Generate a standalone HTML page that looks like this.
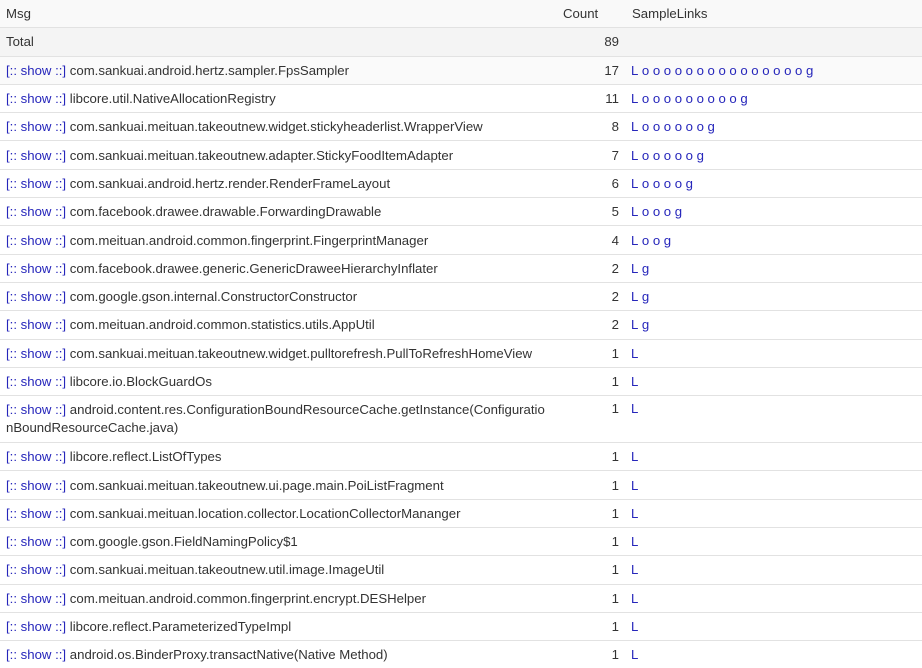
<!DOCTYPE html>
<html><head><meta charset="utf-8"><style>
html,body{margin:0;padding:0;background:#fff;width:922px;height:668px;overflow:hidden}
body{font-family:"Liberation Sans",Arial,sans-serif;font-size:13.2px;color:#333}
table{border-collapse:collapse;width:922px;table-layout:fixed}
td,th{border-bottom:1px solid #e2e2e2;height:27.3px;padding:0 6px;vertical-align:middle;white-space:nowrap;font-weight:normal;text-align:left;overflow:visible}
th{background:#f9f9f9}
tr.t td{background:#f4f4f4}
tr.g td{background:#fafafa}
td.c,th.c{text-align:right;padding-right:3px}
td.l{padding-left:9px;color:#2626bb;letter-spacing:3.6px}
a{color:#2626bb;text-decoration:none}
tr.w td{height:42px;line-height:18px;padding-top:0;padding-bottom:0}
</style></head><body>
<table>
<colgroup><col style="width:560px"><col style="width:62px"><col></colgroup>
<tr><th>Msg</th><th class="c" style="text-align:left;padding-left:3px">Count</th><th style="padding-left:10px">SampleLinks</th></tr>
<tr class="t"><td>Total</td><td class="c">89</td><td></td></tr>
<tr class="g"><td><a>[:: show ::]</a> com.sankuai.android.hertz.sampler.FpsSampler</td><td class="c">17</td><td class="l">Looooooooooooooog</td></tr>
<tr><td><a>[:: show ::]</a> libcore.util.NativeAllocationRegistry</td><td class="c">11</td><td class="l">Looooooooog</td></tr>
<tr><td><a>[:: show ::]</a> com.sankuai.meituan.takeoutnew.widget.stickyheaderlist.WrapperView</td><td class="c">8</td><td class="l">Loooooog</td></tr>
<tr><td><a>[:: show ::]</a> com.sankuai.meituan.takeoutnew.adapter.StickyFoodItemAdapter</td><td class="c">7</td><td class="l">Looooog</td></tr>
<tr><td><a>[:: show ::]</a> com.sankuai.android.hertz.render.RenderFrameLayout</td><td class="c">6</td><td class="l">Loooog</td></tr>
<tr><td><a>[:: show ::]</a> com.facebook.drawee.drawable.ForwardingDrawable</td><td class="c">5</td><td class="l">Looog</td></tr>
<tr><td><a>[:: show ::]</a> com.meituan.android.common.fingerprint.FingerprintManager</td><td class="c">4</td><td class="l">Loog</td></tr>
<tr><td><a>[:: show ::]</a> com.facebook.drawee.generic.GenericDraweeHierarchyInflater</td><td class="c">2</td><td class="l">Lg</td></tr>
<tr><td><a>[:: show ::]</a> com.google.gson.internal.ConstructorConstructor</td><td class="c">2</td><td class="l">Lg</td></tr>
<tr><td><a>[:: show ::]</a> com.meituan.android.common.statistics.utils.AppUtil</td><td class="c">2</td><td class="l">Lg</td></tr>
<tr><td><a>[:: show ::]</a> com.sankuai.meituan.takeoutnew.widget.pulltorefresh.PullToRefreshHomeView</td><td class="c">1</td><td class="l">L</td></tr>
<tr><td><a>[:: show ::]</a> libcore.io.BlockGuardOs</td><td class="c">1</td><td class="l">L</td></tr>
<tr class="w"><td><a>[:: show ::]</a> android.content.res.ConfigurationBoundResourceCache.getInstance(Configuratio<br>nBoundResourceCache.java)</td><td class="c" style="vertical-align:top;padding-top:4px">1</td><td class="l" style="vertical-align:top;padding-top:4px">L</td></tr>
<tr><td><a>[:: show ::]</a> libcore.reflect.ListOfTypes</td><td class="c">1</td><td class="l">L</td></tr>
<tr><td><a>[:: show ::]</a> com.sankuai.meituan.takeoutnew.ui.page.main.PoiListFragment</td><td class="c">1</td><td class="l">L</td></tr>
<tr><td><a>[:: show ::]</a> com.sankuai.meituan.location.collector.LocationCollectorMananger</td><td class="c">1</td><td class="l">L</td></tr>
<tr><td><a>[:: show ::]</a> com.google.gson.FieldNamingPolicy$1</td><td class="c">1</td><td class="l">L</td></tr>
<tr><td><a>[:: show ::]</a> com.sankuai.meituan.takeoutnew.util.image.ImageUtil</td><td class="c">1</td><td class="l">L</td></tr>
<tr><td><a>[:: show ::]</a> com.meituan.android.common.fingerprint.encrypt.DESHelper</td><td class="c">1</td><td class="l">L</td></tr>
<tr><td><a>[:: show ::]</a> libcore.reflect.ParameterizedTypeImpl</td><td class="c">1</td><td class="l">L</td></tr>
<tr><td><a>[:: show ::]</a> android.os.BinderProxy.transactNative(Native Method)</td><td class="c">1</td><td class="l">L</td></tr>
</table>
</body></html>
